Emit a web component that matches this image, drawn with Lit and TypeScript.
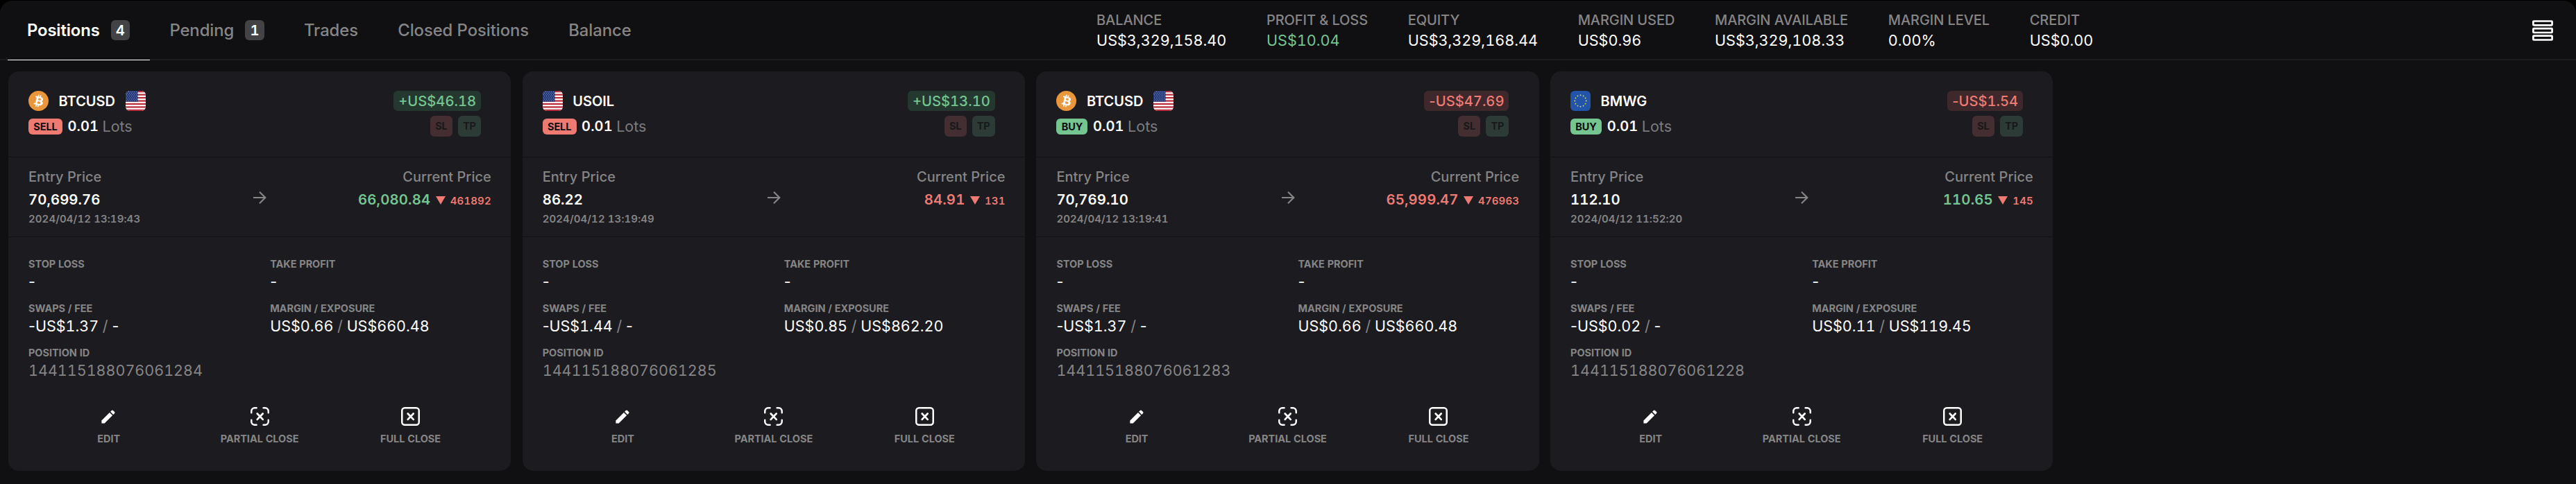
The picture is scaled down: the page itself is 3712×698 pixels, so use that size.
import { LitElement, html, svg, css, nothing } from 'lit';
import { customElement, property } from 'lit/decorators.js';
import { classMap } from 'lit/directives/class-map.js';

interface Position {
  symbol: string;
  icon: 'btc' | 'us' | 'eu';
  quote?: 'us';
  side: 'SELL' | 'BUY';
  pnl: string;
  up: boolean;
  entry: string;
  time: string;
  current: string;
  currentUp: boolean;
  diff: string;
  swap: string;
  margin: string;
  exposure: string;
  id: string;
}

const positions: Position[] = [
  { symbol: 'BTCUSD', icon: 'btc', quote: 'us', side: 'SELL', pnl: '+US$46.18', up: true, entry: '70,699.76', time: '2024/04/12 13:19:43', current: '66,080.84', currentUp: true, diff: '461892', swap: '-US$1.37', margin: 'US$0.66', exposure: 'US$660.48', id: '144115188076061284' },
  { symbol: 'USOIL', icon: 'us', side: 'SELL', pnl: '+US$13.10', up: true, entry: '86.22', time: '2024/04/12 13:19:49', current: '84.91', currentUp: false, diff: '131', swap: '-US$1.44', margin: 'US$0.85', exposure: 'US$862.20', id: '144115188076061285' },
  { symbol: 'BTCUSD', icon: 'btc', quote: 'us', side: 'BUY', pnl: '-US$47.69', up: false, entry: '70,769.10', time: '2024/04/12 13:19:41', current: '65,999.47', currentUp: false, diff: '476963', swap: '-US$1.37', margin: 'US$0.66', exposure: 'US$660.48', id: '144115188076061283' },
  { symbol: 'BMWG', icon: 'eu', side: 'BUY', pnl: '-US$1.54', up: false, entry: '112.10', time: '2024/04/12 11:52:20', current: '110.65', currentUp: true, diff: '145', swap: '-US$0.02', margin: 'US$0.11', exposure: 'US$119.45', id: '144115188076061228' },
];

const tabs = [
  { label: 'Positions', count: 4, active: true },
  { label: 'Pending', count: 1 },
  { label: 'Trades' },
  { label: 'Closed Positions' },
  { label: 'Balance' },
];

const stats = [
  { label: 'BALANCE', value: 'US$3,329,158.40' },
  { label: 'PROFIT & LOSS', value: 'US$10.04', up: true },
  { label: 'EQUITY', value: 'US$3,329,168.44' },
  { label: 'MARGIN USED', value: 'US$0.96' },
  { label: 'MARGIN AVAILABLE', value: 'US$3,329,108.33' },
  { label: 'MARGIN LEVEL', value: '0.00%' },
  { label: 'CREDIT', value: 'US$0.00' },
];

const btcIcon = html`<svg class="coin" viewBox="0 0 32 32">
  <circle cx="16" cy="16" r="16" fill="#e9973a"/>
  <path fill="#fff" d="M23.19 14.02c.31-2.1-1.29-3.23-3.47-3.98l.71-2.84-1.73-.43-.69 2.76c-.45-.11-.92-.22-1.38-.32l.69-2.78-1.72-.43-.71 2.84c-.38-.09-.75-.17-1.1-.26v-.01l-2.38-.6-.46 1.85s1.28.29 1.25.31c.7.17.83.64.8 1.01l-.8 3.23c.05.01.11.03.18.06l-.18-.05-1.13 4.53c-.09.21-.3.53-.79.41.02.03-1.25-.31-1.25-.31l-.86 1.98 2.25.56c.42.1.83.21 1.23.31l-.72 2.87 1.73.43.71-2.84c.47.13.93.25 1.38.36l-.71 2.83 1.73.43.72-2.87c2.95.56 5.17.33 6.1-2.33.75-2.15-.04-3.39-1.59-4.19 1.13-.26 1.98-1 2.2-2.53zm-3.95 5.54c-.54 2.15-4.15.99-5.32.7l.95-3.81c1.17.3 4.93.87 4.37 3.11zm.54-5.57c-.49 1.95-3.5.96-4.47.72l.86-3.46c.98.25 4.12.7 3.61 2.74z"/>
</svg>`;

const usFlag = html`<svg class="flag" viewBox="0 0 29 29">
  <rect width="29" height="29" fill="#fff"/>
  ${[0, 2, 4, 6, 8, 10, 12].map((i) => svg`<rect y=${(i * 29) / 13} width="29" height=${29 / 13} fill="#b72b3b"/>`)}
  <rect width="17.6" height="15.6" fill="#23387a"/>
  ${[0, 1, 2, 3, 4, 5, 6].flatMap((r) =>
    [0, 1, 2, 3, 4, 5].map((c) => svg`<circle cx=${1.5 + c * 2.8 + (r % 2) * 1.2} cy=${1.5 + r * 2.1} r=".48" fill="#dfe4f2"/>`),
  )}
</svg>`;

const euFlag = html`<svg class="flag" viewBox="0 0 29 29">
  <rect width="29" height="29" fill="#2254a9"/>
  ${Array.from({ length: 12 }, (_, i) => {
    const a = (i * Math.PI) / 6;
    return svg`<circle cx=${14.5 + 8.2 * Math.sin(a)} cy=${14.5 - 8.2 * Math.cos(a)} r=".95" fill="#e9df4c"/>`;
  })}
</svg>`;

const flags = { btc: btcIcon, us: usFlag, eu: euFlag };

const pencil = html`<svg class="act-icon" viewBox="0 0 27 27" fill="#fff">
  <path d="M3.400 19.400 14.900 7.900l4.200 4.200L7.600 23.600H3.400z"/>
  <path d="m16.100 6.700 1.800-1.800q1-.95 2 0l2.200 2.200q.95 1 0 2L20.300 10.900z"/>
</svg>`;

const cross = svg`<path d="m9.700 9.500 8 8.400M17.700 9.500l-8 8.400" stroke-width="2.700"/>`;

const partial = html`<svg class="act-icon" viewBox="0 0 27 27" fill="none" stroke="#fff" stroke-width="2.500" stroke-linecap="round">
  <path d="M1.250 8.300V6A4.800 4.800 0 0 1 6 1.250h2.600M18.600 1.250H21A4.800 4.800 0 0 1 25.750 6v2.300M25.750 18.700V21A4.800 4.800 0 0 1 21 25.750h-2.400M8.600 25.750H6A4.800 4.800 0 0 1 1.250 21v-2.300"/>
  ${cross}
</svg>`;

const full = html`<svg class="act-icon" viewBox="0 0 27 27" fill="none" stroke="#fff" stroke-width="2.500" stroke-linecap="round">
  <rect x="1.250" y="1.250" width="24.500" height="24.500" rx="4"/>
  ${cross}
</svg>`;

/** Keeps a leading minus at its narrow width beside fixed-width digits. */
const amount = (text: string) =>
  text.startsWith('-') ? html`<span class="minus">-</span>${text.slice(1)}` : text;

@customElement('position-card')
class PositionCard extends LitElement {
  @property({ attribute: false }) p!: Position;

  static styles = css`
    :host { display: flex; flex-direction: column; background: #1c1b1f; border-radius: 15px; color: #fff; }
    * { box-sizing: border-box; }
    svg { display: block; flex: none; }
    .minus { font-variant-numeric: normal; }
    .head { display: flex; justify-content: space-between; height: 124px; padding: 28px 43.200px 0 29px; border-bottom: 1px solid #111113; }
    .col { display: flex; flex-direction: column; gap: 7px; }
    .end { align-items: flex-end; }
    .row { display: flex; align-items: center; height: 29px; }
    .coin, .flag { width: 29px; height: 29px; }
    .flag { border-radius: 6px; overflow: hidden; }
    .symbol { font-size: 20px; font-weight: 600; margin: 0 14.500px; }
    .lots { height: 30px; }
    .side { height: 23px; line-height: 23px; padding: 0 7.300px; border-radius: 6px; font-size: 14.500px; font-weight: 700; letter-spacing: -0.100px; color: #0d0d0e; background: #ef7a72; }
    .side.buy { background: #75c591; }
    .size { font-size: 20px; font-weight: 600; margin-left: 7.500px; letter-spacing: 0.100px; }
    .unit { font-size: 21.500px; color: #7b7b7e; margin-left: 5.500px; }
    .pnl { height: 29px; line-height: 29px; padding: 0 7px; border-radius: 6px; font-size: 20.200px; font-weight: 500; color: #75c591; background: #25382f; }
    .pnl.down { color: #ef7a72; background: #3e282b; }
    .chips { display: flex; gap: 8px; }
    .chip { height: 30px; line-height: 30px; padding: 0 7.300px; border-radius: 6px; font-size: 14.500px; font-weight: 700; letter-spacing: -0.200px; color: #18181a; background: #442e31; }
    .chip.tp { background: #2c3b35; }
    .price { display: flex; justify-content: space-between; height: 115px; padding: 14px 28.500px 0 29px; border-bottom: 1px solid #111113; }
    .side-col { flex: 1; }
    .label { font-size: 20px; font-weight: 500; line-height: 28px; letter-spacing: 0.030px; color: #858586; }
    .value { font-size: 20.300px; font-weight: 600; line-height: 29px; margin-top: 4px; letter-spacing: 0.080px; }
    .now { display: flex; align-items: baseline; letter-spacing: 0.150px; }
    .time { font-size: 15px; font-weight: 600; line-height: 22px; margin-top: 2.500px; letter-spacing: 0.100px; color: #858586; }
    .arrow { width: 20px; height: 20px; margin-top: 33.500px; }
    .right { display: flex; flex-direction: column; align-items: flex-end; }
    .tri { width: 14px; height: 12px; margin: 0 7px 0 7.500px; fill: #ef7a72; }
    .diff { font-size: 15px; font-weight: 600; }
    .green { color: #75c591; }
    .red { color: #ef7a72; }
    .details { display: grid; grid-template-columns: 1fr 1fr; gap: 14.200px 30px; padding: 28px 29px 0; }
    .name { font-size: 14.500px; font-weight: 700; line-height: 22px; letter-spacing: -0.040px; color: #858586; }
    .num { font-size: 21.500px; line-height: 28px; white-space: pre; }
    .dim { color: #858586; }
    .actions { display: grid; grid-template-columns: repeat(3, 1fr); padding: 38.500px 36px 35px; }
    .action { display: flex; flex-direction: column; align-items: center; gap: 8px; }
    .act-icon { width: 27px; height: 27px; }
  `;

  render() {
    const p = this.p;
    return html`
      <div class="head">
        <div class="col">
          <div class="row">${flags[p.icon]}<span class="symbol">${p.symbol}</span>${p.quote ? flags[p.quote] : nothing}</div>
          <div class="row lots">
            <span class=${classMap({ side: true, buy: p.side === 'BUY' })}>${p.side}</span>
            <span class="size">0.01</span><span class="unit">Lots</span>
          </div>
        </div>
        <div class="col end">
          <div class=${classMap({ pnl: true, down: !p.up })}>${amount(p.pnl)}</div>
          <div class="chips"><span class="chip">SL</span><span class="chip tp">TP</span></div>
        </div>
      </div>
      <div class="price">
        <div class="side-col">
          <div class="label">Entry Price</div>
          <div class="value">${p.entry}</div>
          <div class="time">${p.time}</div>
        </div>
        <svg class="arrow" viewBox="0 0 20 20" fill="none" stroke="#858586" stroke-width="2.200"><path d="M1 10h17M10 1.700 18.300 10 10 18.300"/></svg>
        <div class="side-col right">
          <div class="label">Current Price</div>
          <div class="value now ${p.currentUp ? 'green' : 'red'}">
            <span>${p.current}</span>
            <svg class="tri" viewBox="0 0 14 12"><path d="M0 0h14L7 12z"/></svg>
            <span class="diff red">${p.diff}</span>
          </div>
        </div>
      </div>
      <div class="details">
        <div><div class="name">STOP LOSS</div><div class="num">${amount('-')}</div></div>
        <div><div class="name">TAKE PROFIT</div><div class="num">${amount('-')}</div></div>
        <div><div class="name">SWAPS / FEE</div><div class="num">${amount(p.swap)}<span class="dim"> / </span>${amount('-')}</div></div>
        <div><div class="name">MARGIN / EXPOSURE</div><div class="num">${p.margin}<span class="dim"> / </span>${p.exposure}</div></div>
        <div><div class="name">POSITION ID</div><div class="num dim">${p.id}</div></div>
      </div>
      <div class="actions">
        <div class="action">${pencil}<span class="name">EDIT</span></div>
        <div class="action">${partial}<span class="name">PARTIAL CLOSE</span></div>
        <div class="action">${full}<span class="name">FULL CLOSE</span></div>
      </div>
    `;
  }
}

@customElement('app-root')
class AppRoot extends LitElement {
  static styles = css`
    :host { display: block; height: 698px; padding-top: 1px; box-sizing: border-box; background: #000; color: #fff; font-family: Inter, sans-serif; font-variant-numeric: tabular-nums; overflow: hidden; }
    * { box-sizing: border-box; }
    .panel { height: 697px; background: #101012; border-radius: 18px 18px 0 0; }
    .bar { display: flex; justify-content: space-between; height: 86px; padding: 0 33px 0 11px; border-bottom: 2px solid #1c1c1f; }
    .tabs { display: flex; }
    .tab { display: flex; align-items: center; gap: 16px; height: 86px; padding: 0 28.800px 1px 28.500px; font-size: 23.850px; font-weight: 500; letter-spacing: -0.080px; color: #858586; }
    .tab.active { color: #fff; font-weight: 600; letter-spacing: -0.150px; border-bottom: 1px solid #fff; padding-left: 28px; padding-bottom: 0; }
    .count { width: 27.500px; height: 29px; line-height: 29px; border-radius: 6px; text-align: center; background: #434345; color: #fff; font-size: 20.300px; font-weight: 600; letter-spacing: 0; }
    .stats { display: flex; gap: 57.700px; padding: 14px 0 0 9px; }
    .key { font-size: 20px; font-weight: 500; line-height: 28px; letter-spacing: -0.080px; color: #858586; }
    .val { font-size: 21.600px; line-height: 30px; }
    .green { color: #75c591; }
    .menu { display: block; width: 30px; height: 30px; margin-top: 28px; }
    .cards { display: grid; grid-template-columns: repeat(4, 724.300px); gap: 16.400px; padding: 16px 12px 0; height: 592px; }
  `;

  render() {
    return html`
      <div class="panel">
        <div class="bar">
          <div class="tabs">
            ${tabs.map((t) => html`<div class=${classMap({ tab: true, active: !!t.active })}><span>${t.label}</span>${t.count ? html`<span class="count">${t.count}</span>` : nothing}</div>`)}
          </div>
          <div class="stats">
            ${stats.map((s) => html`<div><div class="key">${s.label}</div><div class="val ${s.up ? 'green' : ''}">${s.value}</div></div>`)}
          </div>
          <svg class="menu" viewBox="0 0 30 30" fill="none" stroke="#fff" stroke-width="2.700">
            <rect x="1.400" y="1.500" width="27.200" height="5.800" rx=".8"/>
            <rect x="1.400" y="12.200" width="27.200" height="5.800" rx=".8"/>
            <rect x="1.400" y="22.700" width="27.200" height="5.800" rx=".8"/>
          </svg>
        </div>
        <div class="cards">${positions.map((p) => html`<position-card .p=${p}></position-card>`)}</div>
      </div>
    `;
  }
}
